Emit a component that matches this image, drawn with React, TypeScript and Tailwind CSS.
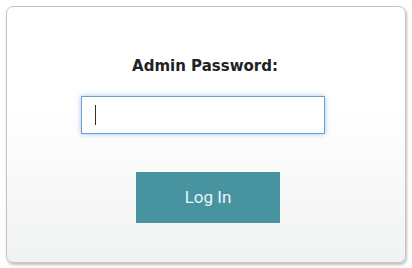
export default function App() {
  return (
    <div className="w-[412px] h-[268px] bg-white p-[6px] pb-[5px]">
      <div className="h-[257px] rounded-[7px] border border-[#c4c4c4] bg-gradient-to-b from-white from-40% to-[#f1f2f2] shadow-[1px_2px_3px_rgba(0,0,0,0.25)] flex flex-col items-center pt-[49px]">
        <label className="mr-[2px] text-[15px] font-bold text-[#222] font-['DejaVu_Sans',sans-serif] leading-[20px]">
          Admin Password:
        </label>
        <div className="mt-[20px] mr-[6px] w-[244px] h-[38px] border border-[#6b9fcf] bg-white shadow-[0_0_5px_rgba(100,160,220,0.6)] flex items-center px-[13px]">
          <span className="w-[1px] h-[20px] bg-[#333]" />
        </div>
        <button className="mt-[38px] ml-[4px] w-[144px] h-[51px] bg-[#4893a0] text-[#e6f6f6] text-[17px] font-['Roboto',sans-serif]">
          Log In
        </button>
      </div>
    </div>
  );
}
